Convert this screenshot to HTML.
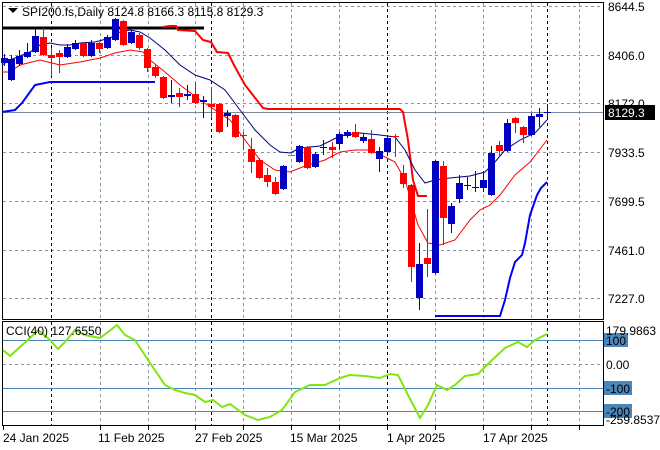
<!DOCTYPE html><html><head><style>body{margin:0;background:#fff}svg{display:block;font-family:"Liberation Sans",sans-serif}</style></head><body>
<svg width="660" height="450" xmlns="http://www.w3.org/2000/svg">
<rect width="660" height="450" fill="#fff"/>
<g stroke="#8a95a2" stroke-dasharray="3,3" stroke-width="1">
<path d="M3 6.5H604M3 55.5H604M3 103.5H604M3 152.5H604M3 201.5H604M3 250.5H604M3 298.5H604"/>
<path d="M100.5 3V319M148.5 3V319M195.5 3V319M243.5 3V319M291.5 3V319M339.5 3V319M435.5 3V319M483.5 3V319M531.5 3V319M579.5 3V319"/>
<path d="M100.5 322V425M148.5 322V425M195.5 322V425M243.5 322V425M291.5 322V425M339.5 322V425M435.5 322V425M483.5 322V425M531.5 322V425M579.5 322V425M3 364.5H604"/>
</g>
<g stroke="#000" stroke-dasharray="3,3"><path d="M51.5 3V319M211.5 3V319M387.5 3V319M547.5 3V319M51.5 322V425M211.5 322V425M387.5 322V425M547.5 322V425"/></g>
<path d="M3 112.5H604" stroke="#7b8794"/>
<path d="M3 340.5H604M3 388.5H604M3 411.5H604" stroke="#4a86b8"/>
<rect x="2.5" y="2.5" width="601" height="317" fill="none" stroke="#000"/>
<rect x="2.5" y="321.5" width="601" height="104" fill="none" stroke="#000"/>
<path d="M2 28H204" stroke="#000" stroke-width="3"/>
<polyline fill="none" stroke="#0000ff" stroke-width="2" points="2,112 15,110 22,103 35,85 50,82 155,82"/>
<polyline fill="none" stroke="#0000ff" stroke-width="2" points="435,316 500,316 505,300 510,278 515,262 522,255 525,243 530,215 537,195 541,188 547,182"/>
<polyline fill="none" stroke="#ff0000" stroke-width="2" points="163,27 170,26 176,26 178,30 195,31 203,40 211,42 217,52 228,53 235,67 245,85 263,108 268,109 400,109 403,112 408,140 413,180 418,196 427,196"/>
<polyline fill="none" stroke="#000080" points="2,65 10,60 20,56 30,52 40,45 50,43 60,45 70,45 80,43 95,42 110,38 120,32 130,30 140,32 150,38 165,50 180,65 195,75 210,80 225,90 240,110 255,130 270,145 280,152 290,153 300,148 320,146 340,136 360,133 380,135 395,137 405,150 415,170 425,183 435,180 450,178 470,176 485,172 495,162 505,150 520,140 535,133 547,120"/>
<polyline fill="none" stroke="#ff0000" points="2,72 10,72 20,65 40,60 60,65 80,62 100,58 115,53 130,50 143,52 150,60 165,72 180,85 200,100 215,110 230,120 245,140 260,160 275,170 290,172 305,166 325,160 340,152 355,150 370,150 385,157 395,162 405,180 418,225 428,243 440,245 455,240 470,220 480,210 490,205 500,195 515,175 530,162 547,140"/>
<path stroke="#0000c0" d="M4.5 54V66M11.5 55V81M19.5 50V66M27.5 43V58M35.5 29V53M67.5 44V58M75.5 40V50M91.5 40V57M107.5 35V49M115.5 18V41M131.5 30V44M171.5 80V103M187.5 85V100M203.5 96V118M227.5 110V127M283.5 165V190M299.5 145V163M315.5 152V168M323.5 140V155M339.5 132V150M347.5 130V138M363.5 134V143M379.5 147V172M387.5 135V153M419.5 243V310M435.5 160V274M451.5 203V233M459.5 175V203M467.5 177V190M475.5 171V192M483.5 171V192M491.5 146V196M507.5 119V152M531.5 113V136M539.5 108V127M547.5 104V117"/>
<path fill="#0000c0" d="M1 58h7v5h-7zM8 59h7v21h-7zM16 56h7v8h-7zM24 52h7v5h-7zM32 36h7v16h-7zM64 47h7v10h-7zM72 43h7v6h-7zM88 43h7v13h-7zM104 37h7v11h-7zM112 19h7v21h-7zM128 32h7v11h-7zM168 95h7v2h-7zM184 94h7v2h-7zM200 100h7v2h-7zM224 113h7v3h-7zM280 166h7v23h-7zM296 146h7v16h-7zM312 154h7v13h-7zM320 147h7v1h-7zM336 134h7v10h-7zM344 132h7v4h-7zM360 137h7v4h-7zM376 151h7v8h-7zM384 138h7v14h-7zM416 264h7v34h-7zM432 161h7v112h-7zM448 206h7v18h-7zM456 183h7v16h-7zM464 185h7v1h-7zM472 187h7v1h-7zM480 180h7v8h-7zM488 153h7v42h-7zM504 123h7v28h-7zM528 116h7v19h-7zM536 114h7v3h-7zM544 112h7v1h-7z"/>
<path stroke="#ff0000" d="M43.5 28V56M51.5 48V76M59.5 50V73M83.5 42V57M99.5 42V53M123.5 20V46M139.5 33V50M147.5 48V72M155.5 65V78M163.5 76V99M179.5 88V107M195.5 82V104M211.5 87V118M219.5 103V133M235.5 114V138M243.5 132V150M251.5 138V173M259.5 158V179M267.5 168V187M275.5 177V195M307.5 146V169M332.5 142V158M355.5 124V138M371.5 130V154M395.5 134V157M403.5 165V188M411.5 184V282M427.5 209V277M443.5 161V245M499.5 141V157M515.5 117V133M523.5 126V143"/>
<path fill="#ff0000" d="M40 37h7v18h-7zM48 55h7v3h-7zM56 53h7v4h-7zM80 43h7v13h-7zM96 43h7v6h-7zM120 21h7v24h-7zM136 35h7v13h-7zM144 49h7v19h-7zM152 67h7v9h-7zM160 77h7v21h-7zM176 93h7v4h-7zM192 94h7v9h-7zM208 104h7v3h-7zM216 104h7v28h-7zM232 115h7v22h-7zM240 135h7v1h-7zM248 149h7v13h-7zM256 160h7v18h-7zM264 175h7v7h-7zM272 182h7v12h-7zM304 147h7v21h-7zM329 147h7v3h-7zM352 132h7v5h-7zM368 139h7v14h-7zM392 136h7v1h-7zM400 173h7v11h-7zM408 185h7v82h-7zM424 258h7v6h-7zM440 166h7v52h-7zM496 145h7v6h-7zM512 118h7v5h-7zM520 127h7v8h-7z"/>
<path stroke="#00cc00" d="M288 155.5h7"/>
<polyline fill="none" stroke="#7fe614" stroke-width="2" points="3,350 10,356 30,338 38,330 50,340 58,349 65,342 75,330 85,335 100,338 108,332 117,325 125,335 135,340 148,360 165,385 175,390 185,393 195,395 205,402 213,400 222,407 230,404 245,415 258,420 270,417 282,410 295,392 310,385 325,385 340,378 350,375 365,376 380,378 390,374 398,375 408,395 420,418 428,405 437,385 447,390 455,385 465,376 478,374 490,362 505,348 518,342 527,347 535,340 547,334"/>
<g font-size="12" fill="#000">
<path d="M8 8H18L13 13Z" fill="#000"/>
<text x="22" y="16">SPI200.fs,Daily  8124.8 8166.3 8115.8 8129.3</text>
<text x="6" y="335">CCI(40) 127.6550</text>
<text x="608" y="11">8644.5</text><text x="608" y="60">8406.0</text><text x="608" y="108">8172.0</text><text x="608" y="157">7933.5</text><text x="608" y="206">7699.5</text><text x="608" y="255">7461.0</text><text x="608" y="303">7227.0</text>
<rect x="605" y="105" width="50" height="15" fill="#000"/><text x="608" y="117" fill="#fff">8129.3</text>
<rect x="604" y="333" width="24" height="14" fill="#4a86b8"/><rect x="604" y="381" width="28" height="14" fill="#4a86b8"/><rect x="604" y="404" width="28" height="14" fill="#4a86b8"/>
<text x="606" y="335">179.9863</text><text x="606" y="345">100</text><text x="606" y="369">0.00</text><text x="606" y="393">-100</text><text x="606" y="416">-200</text><text x="606" y="424">-259.8537</text>
<text x="3" y="442">24 Jan 2025</text><text x="98" y="442">11 Feb 2025</text><text x="195" y="442">27 Feb 2025</text><text x="290" y="442">15 Mar 2025</text><text x="387" y="442">1 Apr 2025</text><text x="483" y="442">17 Apr 2025</text>
</g>
<path d="M3.5 426V430M100.5 426V430M148.5 426V430M195.5 426V430M243.5 426V430M291.5 426V430M339.5 426V430M387.5 426V430M435.5 426V430M483.5 426V430M531.5 426V430M579.5 426V430" stroke="#000"/>
</svg>
</body></html>
